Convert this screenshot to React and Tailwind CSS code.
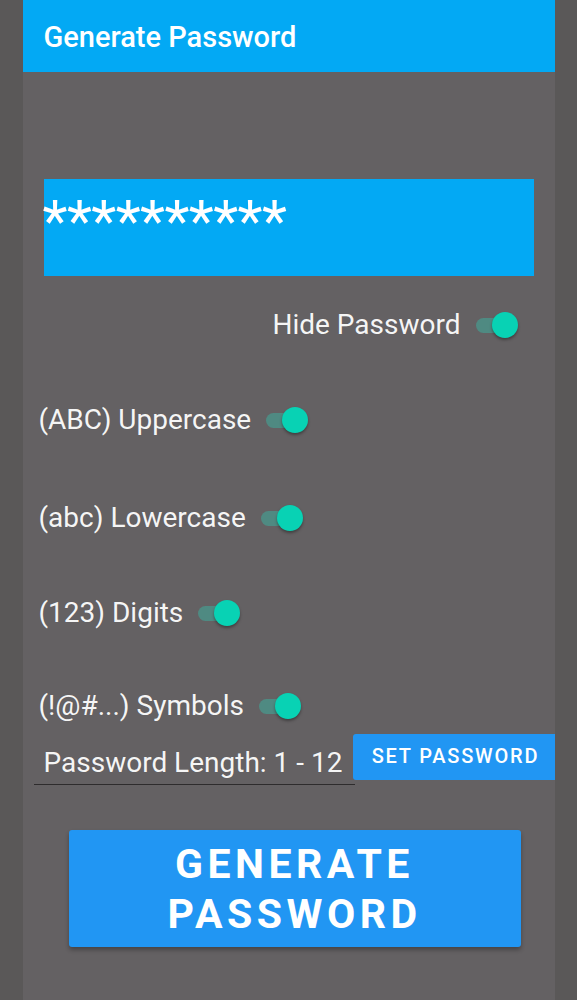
import React, { useState } from 'react';

const Switch = ({ on, onToggle }) => (
    <button
        type="button"
        onClick={onToggle}
        className="relative w-[42px] h-[28px] shrink-0 focus:outline-none"
    >
        <span className={`absolute left-0 top-[7px] w-[34px] h-[15px] rounded-full ${on ? 'bg-[#4f8a82]' : 'bg-[#8a8a8a]'}`} />
        <span
            className={`absolute top-[1px] w-[26px] h-[26px] rounded-full shadow-[0_2px_3px_rgba(0,0,0,0.35)] ${on ? 'left-[16px] bg-[#08d2b4]' : 'left-0 bg-[#ececec]'}`}
        />
    </button>
);

const OptionRow = ({ label, on, onToggle, className }) => (
    <div className={`flex items-center gap-[15px] pl-[16px] ${className}`}>
        <span className="text-[28px] text-white/95 leading-none">{label}</span>
        <Switch on={on} onToggle={onToggle} />
    </div>
);

const App = () => {
    const [hide, setHide] = useState(true);
    const [opts, setOpts] = useState({ upper: true, lower: true, digits: true, symbols: true });
    const [length, setLength] = useState('');

    const toggle = (k) => setOpts({ ...opts, [k]: !opts[k] });

    return (
        <div className="min-h-[1000px] bg-[#5a5858] flex justify-center" style={{ fontFamily: 'Roboto, "Noto Sans", sans-serif' }}>
            <div className="w-[532px] min-h-[1000px] bg-[#646163] flex flex-col">
                <div className="h-[72px] bg-[#03a9f4] flex items-center pl-[21px] pt-[2px]">
                    <h1 className="text-[29px] font-medium text-white leading-none">Generate Password</h1>
                </div>

                <div className="mt-[107px] ml-[21px] w-[490px] h-[97px] bg-[#03a9f4]">
                    <div className="text-[58px] leading-none text-white pt-[13px] ml-[-1px] tracking-[-0.6px]">
                        {hide ? '**********' : 'aB3$kL9!pQ'}
                    </div>
                </div>

                <div className="flex items-center justify-end gap-[15px] mt-[35px] pr-[37px]">
                    <span className="text-[28px] text-white/95 leading-none">Hide Password</span>
                    <Switch on={hide} onToggle={() => setHide(!hide)} />
                </div>

                <OptionRow className="mt-[67px]" label="(ABC) Uppercase" on={opts.upper} onToggle={() => toggle('upper')} />
                <OptionRow className="mt-[70px]" label="(abc) Lowercase" on={opts.lower} onToggle={() => toggle('lower')} />
                <OptionRow className="mt-[67px]" label="(123) Digits" on={opts.digits} onToggle={() => toggle('digits')} />
                <OptionRow className="mt-[65px]" label="(!@#...) Symbols" on={opts.symbols} onToggle={() => toggle('symbols')} />

                <div className="flex items-start mt-[15px]">
                    <div className="ml-[11px] w-[321px] h-[50px] border-b border-[#2e2c2d] flex items-end">
                        <input
                            value={length}
                            onChange={(e) => setLength(e.target.value)}
                            placeholder="Password Length: 1 - 12"
                            className="w-full bg-transparent pl-[10px] pb-[5px] text-[28px] leading-none text-white placeholder:text-white/95 focus:outline-none"
                        />
                    </div>
                    <button
                        type="button"
                        className="ml-[-2px] mt-[-1px] w-[202px] h-[46px] bg-[#2196f3] rounded-l-[3px] text-white text-[20px] font-medium tracking-[1.8px] flex items-center justify-center pl-[4px] pb-[2px]"
                    >
                        SET PASSWORD
                    </button>
                </div>

                <button
                    type="button"
                    className="mt-[45px] ml-[46px] w-[452px] h-[117px] bg-[#2196f3] rounded-[3px] shadow-[0_3px_4px_rgba(0,0,0,0.3)] text-white text-[41px] font-bold leading-[50px] tracking-[4.5px] flex flex-col items-center justify-center"
                >
                    <span>GENERATE</span>
                    <span>PASSWORD</span>
                </button>
            </div>
        </div>
    );
};

export default App;
